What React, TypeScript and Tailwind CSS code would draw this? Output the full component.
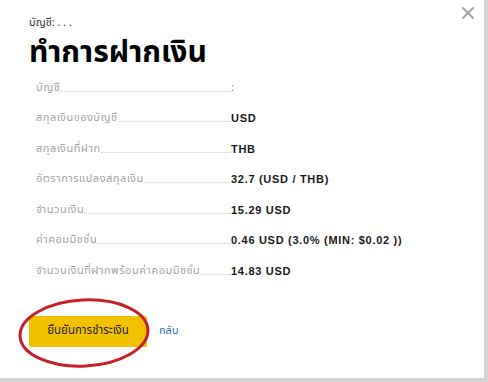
import { X } from 'lucide-react';

const rows = [
  { label: 'บัญชี', value: ':', plain: true },
  { label: 'สกุลเงินของบัญชี', value: 'USD' },
  { label: 'สกุลเงินที่ฝาก', value: 'THB' },
  { label: 'อัตราการแปลงสกุลเงิน', value: '32.7 (USD / THB)' },
  { label: 'จำนวนเงิน', value: '15.29 USD' },
  { label: 'ค่าคอมมิชชั่น', value: '0.46 USD (3.0% (MIN: $0.02 ))' },
  { label: 'จำนวนเงินที่ฝากพร้อมค่าคอมมิชชั่น', value: '14.83 USD' },
];

function App() {
  return (
    <div
      className="w-[488px] h-[382px] bg-[#d4d4d4] overflow-hidden"
      style={{ fontFamily: "Tahoma, 'Noto Sans Thai', 'Liberation Sans', sans-serif" }}
    >
      <div className="relative w-[484px] h-[378px] bg-white pl-[29px] pt-[16px]">
        <button className="absolute right-[6px] top-[3px] text-[#a0a0a0]">
          <X className="w-[20px] h-[20px]" strokeWidth={2.2} />
        </button>

        <div className="text-[11px] text-[#333] leading-[14px]">บัญชี: . . .</div>
        <h1 className="mt-[5px] text-[30px] font-bold text-black leading-[36px]">ทำการฝากเงิน</h1>

        <div className="mt-[1px] pl-[7px]">
          {rows.map((row) => (
            <div key={row.label} className="flex items-end h-[30.5px] pb-[8px]">
              <div className="w-[195px] flex items-end shrink-0">
                <span className="text-[11px] text-[#a3a3a3] leading-[14px] tracking-[0.5px]">{row.label}</span>
                <span className="flex-1 border-b border-dotted border-[#cfcfcf] mb-[3px]" />
              </div>
              <span
                className={
                  row.plain
                    ? 'text-[11px] text-[#888] leading-[14px]'
                    : "text-[11px] font-bold text-[#1a1a1a] leading-[14px] tracking-[0.7px] font-['Liberation_Sans',sans-serif]"
                }
              >
                {row.value}
              </span>
            </div>
          ))}
        </div>

        <div className="relative mt-[30px] flex items-center">
          <svg
            className="absolute left-[-13px] top-[-19px] pointer-events-none"
            width="136"
            height="72"
            viewBox="0 0 136 72"
          >
            <ellipse
              cx="68"
              cy="36"
              rx="64"
              ry="33"
              fill="none"
              stroke="#c6202b"
              strokeWidth="3"
              transform="rotate(-3 68 36)"
            />
          </svg>
          <button className="w-[118px] h-[31px] bg-[#f2c200] rounded-[2px] text-[11.5px] text-[#222]">
            ยืนยันการชำระเงิน
          </button>
          <a className="ml-[12px] text-[11px] text-[#2f6db5]">กลับ</a>
        </div>
      </div>
    </div>
  );
}

export default App;
